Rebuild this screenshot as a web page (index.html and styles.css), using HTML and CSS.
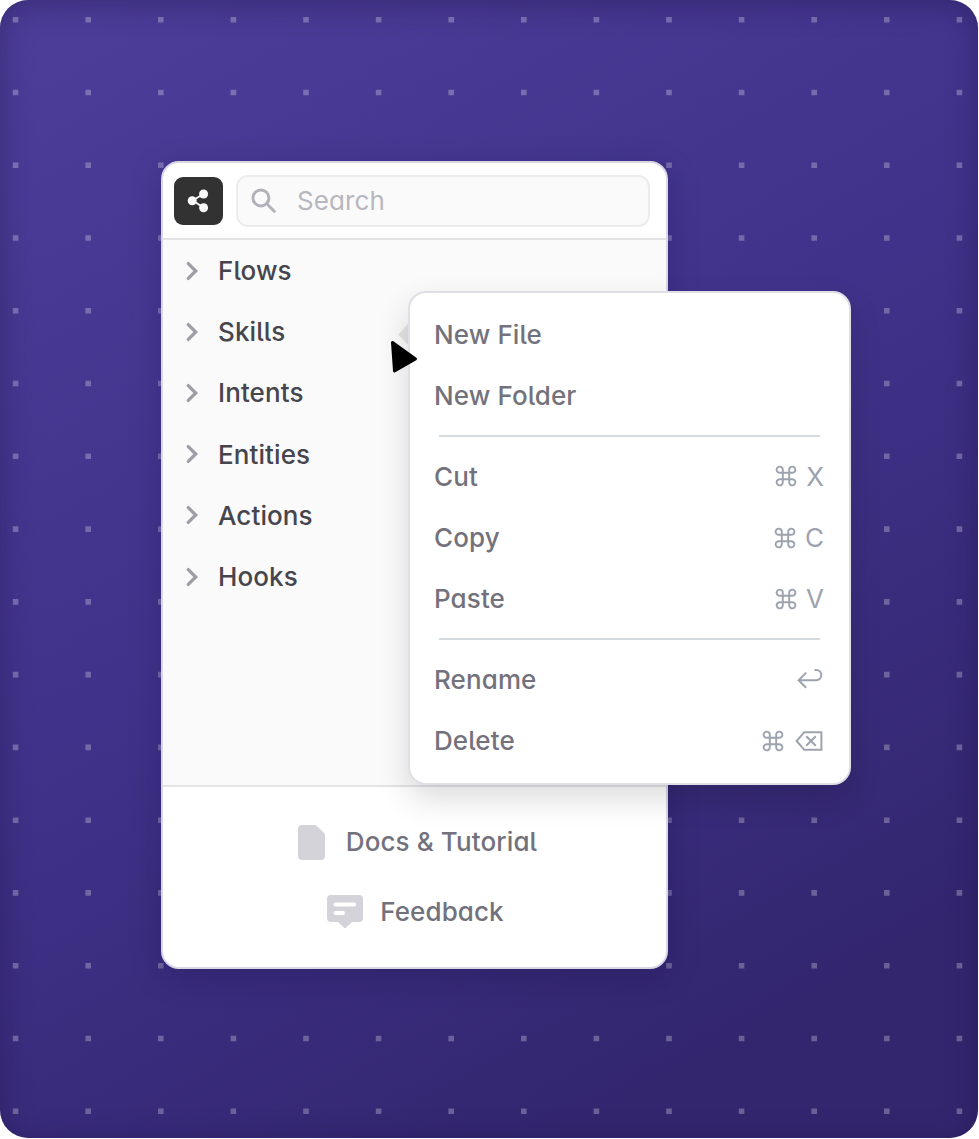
FILE: index.html
```html
<!DOCTYPE html>
<html lang="en">
<head>
<meta charset="utf-8">
<title>File explorer</title>
<link rel="stylesheet" href="styles.css">
</head>
<body>
<svg class="defs" width="0" height="0" aria-hidden="true">
  <symbol id="chevron" viewBox="0 0 14 20"><path d="M3.3 2.6 10.7 10 3.3 17.4" fill="none" stroke="currentColor" stroke-width="3.3" stroke-linecap="round"/></symbol>
  <symbol id="command" viewBox="0 0 22 22"><path d="M7.8 7.8h6.4v6.4H7.8zM7.8 7.8H5A3.1 3.1 0 1 1 7.8 4.8zM14.2 7.8V4.8a3.1 3.1 0 1 1 2.8 3zM14.2 14.2H17a3.1 3.1 0 1 1-2.8 3zM7.8 14.2v3a3.1 3.1 0 1 1-2.8-3z" fill="none" stroke="currentColor" stroke-width="1.9"/></symbol>
</svg>
<main class="stage">
  <svg class="dots" viewBox="0 0 979 1139" aria-hidden="true">
    <path d="M12.8 19.7H979M12.8 92.5H979M12.8 165.2H979M12.8 238H979M12.8 310.8H979M12.8 383.5H979M12.8 456.3H979M12.8 529.1H979M12.8 601.9H979M12.8 674.6H979M12.8 747.4H979M12.8 820.2H979M12.8 892.9H979M12.8 965.7H979M12.8 1038.5H979M12.8 1111.3H979"/>
  </svg>
  <section class="panel">
    <header class="toolbar">
      <button class="share" aria-label="Share">
        <svg width="24" height="26" viewBox="0 0 24 26"><path d="M17 5.8 5.5 12.5 17 19.8" fill="none" stroke="#fafafa" stroke-width="1.8"/><circle cx="5.2" cy="12.8" r="4.5" fill="#fafafa"/><circle cx="16.6" cy="6" r="4.5" fill="#fafafa"/><circle cx="16.6" cy="19.8" r="4.5" fill="#fafafa"/></svg>
      </button>
      <div class="search">
        <svg width="28" height="28" viewBox="0 0 28 28" fill="none" stroke="#b3b2bb" stroke-width="3"><circle cx="10.9" cy="10.9" r="8"/><path d="M16.8 16.8 25.2 25.2"/></svg>
        <span>Search</span>
      </div>
    </header>
    <ul class="tree">
      <li><svg><use href="#chevron"/></svg>Flows</li>
      <li><svg><use href="#chevron"/></svg>Skills</li>
      <li><svg><use href="#chevron"/></svg>Intents</li>
      <li><svg><use href="#chevron"/></svg>Entities</li>
      <li><svg><use href="#chevron"/></svg>Actions</li>
      <li><svg><use href="#chevron"/></svg>Hooks</li>
    </ul>
    <footer class="links">
      <a class="docs"><svg width="27" height="35" viewBox="0 0 27 35"><path d="M4 0h12.8a3 3 0 0 1 2.1.9l7.2 7.1a3 3 0 0 1 .9 2.1V31a4 4 0 0 1-4 4H4a4 4 0 0 1-4-4V4a4 4 0 0 1 4-4z" fill="#d4d3d9"/></svg>Docs &amp; Tutorial</a>
      <a class="feedback"><svg width="36" height="34" viewBox="0 0 36 34"><path d="M4 0h28a4 4 0 0 1 4 4v19a4 4 0 0 1-4 4h-7l-7 6.5L11 27H4a4 4 0 0 1-4-4V4a4 4 0 0 1 4-4z" fill="#d4d3d9"/><path d="M8.5 9.5h18.7M8.5 18H16" stroke="#fff" stroke-width="4" stroke-linecap="round"/></svg>Feedback</a>
    </footer>
    <svg class="pointer-tab" width="12" height="26" viewBox="0 0 12 26"><path d="M12 0 0 12.5 12 25z" fill="#e4e4e7"/></svg>
    <div class="menu">
      <div class="item">New File</div>
      <div class="item">New Folder</div>
      <hr>
      <div class="item">Cut<span class="keys"><svg class="cmd"><use href="#command"/></svg><kbd>X</kbd></span></div>
      <div class="item">Copy<span class="keys"><svg class="cmd"><use href="#command"/></svg><kbd>C</kbd></span></div>
      <div class="item">Paste<span class="keys"><svg class="cmd"><use href="#command"/></svg><kbd>V</kbd></span></div>
      <hr>
      <div class="item">Rename<span class="keys"><svg class="return" width="26" height="22" viewBox="0 0 26 22" fill="none" stroke="currentColor" stroke-width="2"><path d="M17.6 2H19.2a5.1 5.1 0 0 1 0 10.2H2M9.2 4.6 1.6 12.2 9.2 19.8"/></svg></span></div>
      <div class="item">Delete<span class="keys"><svg class="cmd"><use href="#command"/></svg><svg class="erase" width="28" height="20" viewBox="0 0 28 20" fill="none" stroke="currentColor" stroke-width="2"><path d="M9.3 1.2H26.4V18.8H9.3L1.6 10zM11.2 5.2 20.8 14.8M20.8 5.2 11.2 14.8"/></svg></span></div>
    </div>
    <svg class="cursor" width="28" height="34" viewBox="0 0 28 34"><path d="M2.5 2.5 25.5 19 4.5 31z" fill="#000" stroke="#000" stroke-width="3" stroke-linejoin="round"/></svg>
  </section>
</main>
</body>
</html>
```

FILE: styles.css
```css
* { box-sizing: border-box; }
body {
  margin: 0;
  background: #fff;
  font-family: Inter, "Liberation Sans", sans-serif;
  font-size: 26px;
  font-weight: 500;
  letter-spacing: .1px;
  font-feature-settings: "cv11", "cv05";
}
.defs { position: absolute; }
.stage {
  position: relative;
  width: 978px;
  height: 1138px;
  padding: 161px;
  border-radius: 28px;
  overflow: hidden;
  background: linear-gradient(150deg, #4d3e9a 0%, #40328a 45%, #33266f 86%, #33266f 100%);
  box-shadow: inset 0 5px 30px rgba(30, 20, 70, .42);
}
.dots { position: absolute; left: 0; top: 0; width: 979px; height: 1139px; }
.dots path { stroke: #fff; stroke-opacity: .27; stroke-width: 5.6; stroke-dasharray: 5.6 67; }
.panel {
  position: relative;
  display: flex;
  flex-direction: column;
  width: 507px;
  height: 808px;
  border: 2px solid #d9d7e5;
  border-radius: 18px;
  background: #fff;
  box-shadow: 0 8px 32px rgba(20, 10, 60, .22);
}
.toolbar {
  display: flex;
  gap: 13px;
  height: 75px;
  padding: 12px 16px 0 11px;
}
.share {
  display: grid;
  place-items: center;
  width: 49px;
  height: 48px;
  margin-top: 2px;
  padding: 0;
  border: 0;
  border-radius: 9px;
  background: #323232;
}
.search {
  display: flex;
  flex: 1;
  align-items: center;
  gap: 19px;
  height: 52px;
  padding: 0 0 1px 12px;
  border: 2px solid #ececef;
  border-radius: 12px;
  background: #fafafa;
  color: #b8b7be;
  font-weight: 400;
}
.tree {
  flex: 1;
  margin: 0;
  padding: 0 0 0 22px;
  border: solid #e4e4e7;
  border-width: 2px 0;
  background: #fafafa;
  color: #46454d;
  list-style: none;
}
.tree li { display: flex; align-items: center; gap: 19px; height: 61.2px; }
.tree svg { width: 14px; height: 20px; color: #9f9ea8; }
.links {
  display: flex;
  flex-direction: column;
  align-items: center;
  height: 180px;
  padding-top: 19px;
  color: #73727c;
}
.links a { display: flex; align-items: center; height: 70px; }
.links svg { margin-top: 2px; }
.docs { gap: 21px; padding-left: 6px; }
.feedback { gap: 17px; padding-left: 2px; }
.pointer-tab { position: absolute; left: 235px; top: 159px; }
.menu {
  position: absolute;
  left: 245px;
  top: 128px;
  width: 443px;
  height: 494px;
  padding: 11px 25px 0 24px;
  border: 2px solid #e0dfe5;
  border-radius: 18px;
  background: #fff;
  color: #73727c;
  box-shadow: 0 14px 32px rgba(0, 0, 0, .14);
}
.item { display: flex; align-items: center; height: 61.2px; }
.menu hr { height: 2px; margin: 8.5px 4px 9px 5px; border: 0; background: #d6dbe0; }
.keys { display: flex; align-items: center; gap: 9px; margin-left: auto; color: #9ca3af; }
.keys kbd { font: inherit; font-weight: 400; }
.cmd { width: 22px; height: 22px; }
.return, .erase { margin-right: 1px; }
.return { margin-top: -2px; }
.erase { margin-left: 2px; }
.cursor { position: absolute; left: 227px; top: 177px; }
```
